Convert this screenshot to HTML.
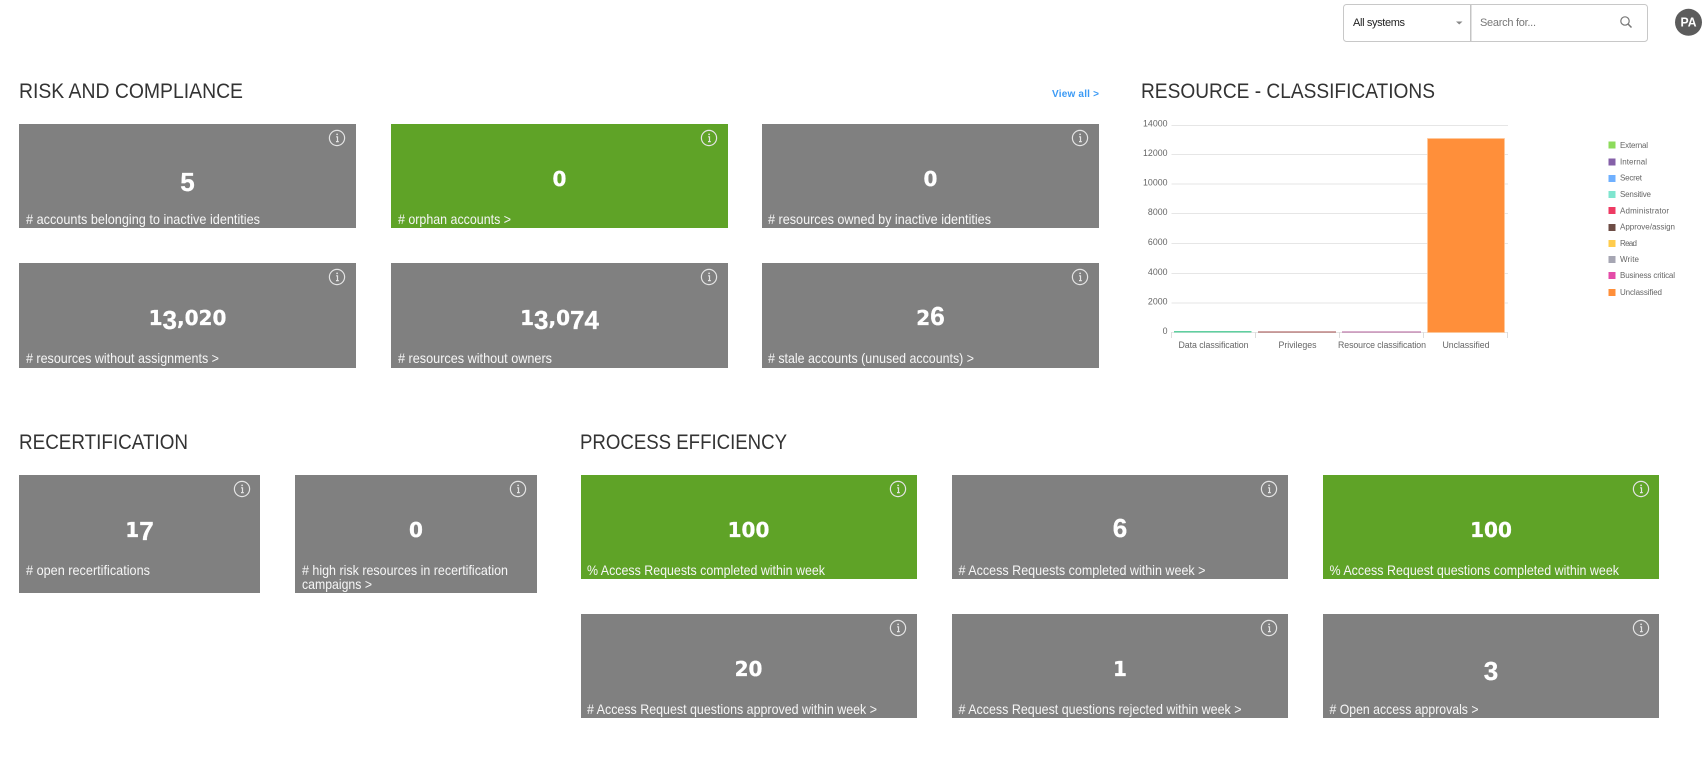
<!DOCTYPE html>
<html><head><meta charset="utf-8"><title>Dashboard</title>
<style>
html,body{margin:0;padding:0;background:#fff;width:1706px;height:766px;overflow:hidden}
svg{display:block;font-family:"Liberation Sans",sans-serif}
.h{font-size:21px;fill:#333}
.l{font-size:14px;fill:#f6f6f6}
.n{font-size:20px;font-weight:bold;fill:#fff;stroke:#fff;stroke-width:.3;text-anchor:middle;font-family:"DejaVu Sans",sans-serif}
.b{font-size:26px;font-family:"Liberation Sans",sans-serif}
.ax{font-size:8.8px;fill:#666}
.lg{font-size:8px;fill:#666}
.g{fill:#808080}.v{fill:#5fa327}
</style></head><body>
<svg width="1706" height="766" viewBox="0 0 1706 766" xmlns="http://www.w3.org/2000/svg">
<defs><g id="i"><circle r="7.6" fill="none" stroke="#e4e4e4" stroke-width="1.2"/><path d="M-.9-1.2H.5V3.6M-1 3.6H1.8" fill="none" stroke="#e4e4e4" stroke-width="1.2"/><circle cx=".1" cy="-3.6" r=".9" fill="#e4e4e4"/></g></defs>

<!-- top bar -->
<rect x="1343.5" y="4.5" width="304" height="37" rx="3" fill="#fff" stroke="#c8c8c8"/>
<rect x="1470" y="5" width="1.5" height="36" fill="#c4c4c4"/>
<text x="1353" y="26" font-size="11" fill="#222" textLength="52">All systems</text>
<path d="M1456 21.5h6.5l-3.25 3z" fill="#888"/>
<text x="1480" y="26" font-size="11" fill="#777" textLength="56">Search for...</text>
<circle cx="1625" cy="21" r="4.2" fill="none" stroke="#777" stroke-width="1.2"/><path d="M1628 24l3.5 3.5" stroke="#777" stroke-width="1.5"/>
<circle cx="1688.5" cy="22.3" r="13.5" fill="#5c5c5c"/>
<text x="1680.5" y="26.5" font-size="13" font-weight="bold" fill="#fff" textLength="16" lengthAdjust="spacingAndGlyphs">PA</text>

<!-- headings -->
<text class="h" x="19" y="98" textLength="224" lengthAdjust="spacingAndGlyphs">RISK AND COMPLIANCE</text>
<text class="h" x="1141" y="98" textLength="294" lengthAdjust="spacingAndGlyphs">RESOURCE - CLASSIFICATIONS</text>
<text class="h" x="19" y="449" textLength="169" lengthAdjust="spacingAndGlyphs">RECERTIFICATION</text>
<text class="h" x="580" y="449" textLength="207" lengthAdjust="spacingAndGlyphs">PROCESS EFFICIENCY</text>
<text x="1052" y="97" font-size="10" font-weight="bold" fill="#3b9af5" textLength="47">View all &gt;</text>

<!-- risk cards -->
<rect class="g" x="19" y="124" width="337" height="104"/><use href="#i" x="337" y="138"/>
<text class="n" x="187.5" y="186"><tspan class="b" dy="5">5</tspan></text>
<text class="l" x="26" y="224" textLength="234" lengthAdjust="spacingAndGlyphs"># accounts belonging to inactive identities</text>

<rect class="v" x="391" y="124" width="337" height="104"/><use href="#i" x="709" y="138"/>
<text class="n" x="559.5" y="186">0</text>
<text class="l" x="398" y="224" textLength="113" lengthAdjust="spacingAndGlyphs"># orphan accounts &gt;</text>

<rect class="g" x="762" y="124" width="337" height="104"/><use href="#i" x="1080" y="138"/>
<text class="n" x="930.5" y="186">0</text>
<text class="l" x="768" y="224" textLength="223" lengthAdjust="spacingAndGlyphs"># resources owned by inactive identities</text>

<rect class="g" x="19" y="263" width="337" height="105"/><use href="#i" x="337" y="277"/>
<text class="n" x="187.5" y="325">1<tspan class="b" dy="4">3</tspan><tspan dy="-4">,020</tspan></text>
<text class="l" x="26" y="363" textLength="193" lengthAdjust="spacingAndGlyphs"># resources without assignments &gt;</text>

<rect class="g" x="391" y="263" width="337" height="105"/><use href="#i" x="709" y="277"/>
<text class="n" x="559.5" y="325">1<tspan class="b" dy="4">3</tspan><tspan dy="-4">,0</tspan><tspan class="b" dy="4">74</tspan></text>
<text class="l" x="398" y="363" textLength="154" lengthAdjust="spacingAndGlyphs"># resources without owners</text>

<rect class="g" x="762" y="263" width="337" height="105"/><use href="#i" x="1080" y="277"/>
<text class="n" x="930.5" y="325">2<tspan class="b">6</tspan></text>
<text class="l" x="768" y="363" textLength="206" lengthAdjust="spacingAndGlyphs"># stale accounts (unused accounts) &gt;</text>

<!-- recert -->
<rect class="g" x="19" y="475" width="241" height="118"/><use href="#i" x="242" y="489"/>
<text class="n" x="139.5" y="537">1<tspan class="b" dy="3">7</tspan></text>
<text class="l" x="26" y="575" textLength="124" lengthAdjust="spacingAndGlyphs"># open recertifications</text>

<rect class="g" x="295" y="475" width="242" height="118"/><use href="#i" x="518" y="489"/>
<text class="n" x="416" y="537">0</text>
<text class="l" x="302" y="575" textLength="206" lengthAdjust="spacingAndGlyphs"># high risk resources in recertification</text>
<text class="l" x="302" y="589" textLength="70" lengthAdjust="spacingAndGlyphs">campaigns &gt;</text>

<!-- process -->
<rect class="v" x="581" y="475" width="336" height="104"/><use href="#i" x="898" y="489"/>
<text class="n" x="748.5" y="537">100</text>
<text class="l" x="587" y="575" textLength="238" lengthAdjust="spacingAndGlyphs">% Access Requests completed within week</text>

<rect class="g" x="952" y="475" width="336" height="104"/><use href="#i" x="1269" y="489"/>
<text class="n" x="1120" y="537"><tspan class="b">6</tspan></text>
<text class="l" x="958.5" y="575" textLength="247" lengthAdjust="spacingAndGlyphs"># Access Requests completed within week &gt;</text>

<rect class="v" x="1323" y="475" width="336" height="104"/><use href="#i" x="1641" y="489"/>
<text class="n" x="1491" y="537">100</text>
<text class="l" x="1329.5" y="575" textLength="289.5" lengthAdjust="spacingAndGlyphs">% Access Request questions completed within week</text>

<rect class="g" x="581" y="614" width="336" height="104"/><use href="#i" x="898" y="628"/>
<text class="n" x="748.5" y="676">20</text>
<text class="l" x="587" y="714" textLength="290" lengthAdjust="spacingAndGlyphs"># Access Request questions approved within week &gt;</text>

<rect class="g" x="952" y="614" width="336" height="104"/><use href="#i" x="1269" y="628"/>
<text class="n" x="1120" y="676">1</text>
<text class="l" x="958.5" y="714" textLength="283" lengthAdjust="spacingAndGlyphs"># Access Request questions rejected within week &gt;</text>

<rect class="g" x="1323" y="614" width="336" height="104"/><use href="#i" x="1641" y="628"/>
<text class="n" x="1491" y="676"><tspan class="b" dy="4">3</tspan></text>
<text class="l" x="1329.5" y="714" textLength="149" lengthAdjust="spacingAndGlyphs"># Open access approvals &gt;</text>

<!-- chart -->
<g stroke="#e6e6e6" stroke-width="1">
<path d="M1171.5 125.5H1508M1171.5 154.5H1508M1171.5 184H1508M1171.5 213.5H1508M1171.5 243.5H1508M1171.5 273.5H1508M1171.5 303H1508M1171.5 332.5H1508"/>
<path d="M1171.5 332v6M1255.5 332v6M1339.5 332v6M1423.5 332v6M1507.5 332v6" stroke="#ddd"/>
</g>
<g text-anchor="end">
<text class="ax" x="1167.5" y="126.5">14000</text>
<text class="ax" x="1167.5" y="156">12000</text>
<text class="ax" x="1167.5" y="185.5">10000</text>
<text class="ax" x="1167.5" y="215">8000</text>
<text class="ax" x="1167.5" y="245">6000</text>
<text class="ax" x="1167.5" y="275">4000</text>
<text class="ax" x="1167.5" y="304.5">2000</text>
<text class="ax" x="1167.5" y="334">0</text>
</g>
<rect x="1427.5" y="138.5" width="77" height="194" fill="#ff8f3a" stroke="#ffc89c" stroke-width=".8"/>
<rect x="1174" y="331" width="77.5" height="1.5" fill="#5fd0a0"/>
<rect x="1258" y="331.5" width="78" height="1" fill="#a04a48"/>
<rect x="1342" y="331.5" width="79" height="1" fill="#b05c98"/>
<g text-anchor="middle">
<text class="ax" x="1213.5" y="348" textLength="70">Data classification</text>
<text class="ax" x="1297.5" y="348" textLength="38">Privileges</text>
<text class="ax" x="1382" y="348" textLength="88">Resource classification</text>
<text class="ax" x="1466" y="348" textLength="47">Unclassified</text>
</g>

<!-- legend -->
<rect x="1608.5" y="141.5" width="7" height="7" fill="#8ddb5b"/><text class="lg" x="1620" y="148" textLength="28">External</text>
<rect x="1608.5" y="158.5" width="7" height="7" fill="#8560a8"/><text class="lg" x="1620" y="164.5" textLength="27">Internal</text>
<rect x="1608.5" y="175" width="7" height="7" fill="#6fb0ff"/><text class="lg" x="1620" y="180.5" textLength="22">Secret</text>
<rect x="1608.5" y="191" width="7" height="7" fill="#7fe5cf"/><text class="lg" x="1620" y="197" textLength="31">Sensitive</text>
<rect x="1608.5" y="207" width="7" height="7" fill="#ee3a63"/><text class="lg" x="1620" y="213.5" textLength="49">Administrator</text>
<rect x="1608.5" y="224" width="7" height="7" fill="#6d4c45"/><text class="lg" x="1620" y="229.5" textLength="55">Approve/assign</text>
<rect x="1608.5" y="240" width="7" height="7" fill="#ffcc4d"/><text class="lg" x="1620" y="246" textLength="17">Read</text>
<rect x="1608.5" y="256" width="7" height="7" fill="#a6a6b3"/><text class="lg" x="1620" y="262" textLength="19">Write</text>
<rect x="1608.5" y="272" width="7" height="7" fill="#e44ca8"/><text class="lg" x="1620" y="278" textLength="55">Business critical</text>
<rect x="1608.5" y="289" width="7" height="7" fill="#ff8f3a"/><text class="lg" x="1620" y="295" textLength="42">Unclassified</text>
</svg>
</body></html>
